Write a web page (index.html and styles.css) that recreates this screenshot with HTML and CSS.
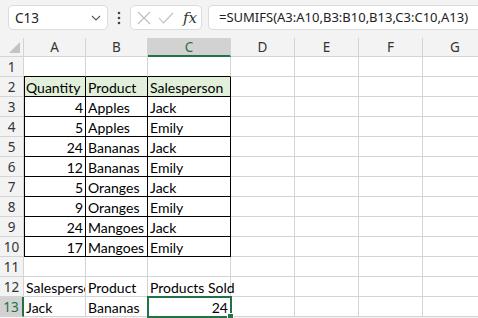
FILE: index.html
```html
<!DOCTYPE html>
<html lang="en">
<head>
  <meta charset="UTF-8" />
  <title>SUMIFS</title>
  <link rel="stylesheet" href="styles.css">
</head>
<body>
  <div class="formula-bar">
    <div class="name-box">
      <span>C13</span>
      <svg class="chevron" width="10" height="6" viewBox="0 0 10 6"><path d="M1 1l4 4 4-4" fill="none" stroke="#555" stroke-width="1.1"/></svg>
    </div>
    <div class="dots">
      <svg width="4" height="14" viewBox="0 0 4 14"><circle cx="2" cy="2" r="1.3" fill="#444"/><circle cx="2" cy="7" r="1.3" fill="#444"/><circle cx="2" cy="12" r="1.3" fill="#444"/></svg>
    </div>
    <div class="fx-box">
      <svg width="14" height="14" viewBox="0 0 14 14"><path d="M1 1l12 12M13 1L1 13" stroke="#bdbdbd" stroke-width="1.1" fill="none"/></svg>
      <svg width="16" height="12" viewBox="0 0 16 12"><path d="M1 6l4.5 5L15 1" stroke="#bdbdbd" stroke-width="1.1" fill="none"/></svg>
      <span class="fx">fx</span>
    </div>
    <div class="formula">=SUMIFS(A3:A10,B3:B10,B13,C3:C10,A13)</div>
  </div>

  <div class="sheet" id="sheet"></div>

  <script>
    const cols = ['A', 'B', 'C', 'D', 'E', 'F', 'G'];
    const rows = [
      [],
      ['Quantity', 'Product', 'Salesperson'],
      [4, 'Apples', 'Jack'],
      [5, 'Apples', 'Emily'],
      [24, 'Bananas', 'Jack'],
      [12, 'Bananas', 'Emily'],
      [5, 'Oranges', 'Jack'],
      [9, 'Oranges', 'Emily'],
      [24, 'Mangoes', 'Jack'],
      [17, 'Mangoes', 'Emily'],
      [],
      ['Salesperson', 'Product', 'Products Sold'],
      ['Jack', 'Bananas', 24]
    ];

    const sheet = document.getElementById('sheet');

    function add(cls, text) {
      const div = document.createElement('div');
      div.className = cls;
      if (text !== undefined) div.textContent = text;
      sheet.appendChild(div);
      return div;
    }

    add('corner');
    cols.forEach(c => add('col-head' + (c === 'C' ? ' active' : '') + (c === 'G' ? ' last' : ''), c));

    rows.forEach((row, r) => {
      const n = r + 1;
      add('row-head' + (n === 13 ? ' active' : ''), n);
      cols.forEach((c, i) => {
        const value = row[i];
        let cls = 'cell';
        if (typeof value === 'number') cls += ' num';
        if (n === 1 && i < 3) cls += ' above-table';
        if (n >= 2 && n <= 10 && i < 3) cls += ' table';
        if (n >= 2 && n <= 10 && i === 0) cls += ' table-left';
        if (n === 2 && i < 3) cls += ' table-head';
        if (n === 12 && i === 0) cls += ' clip';
        if (n === 13 && i === 2) cls += ' selected';
        if (c === 'G') cls += ' last';
        const cell = add(cls);
        if (value !== undefined) {
          const span = document.createElement('span');
          span.textContent = value;
          cell.appendChild(span);
        }
      });
    });
  </script>
</body>
</html>
```

FILE: styles.css
```css
body {
  margin: 0;
  width: 478px;
  height: 318px;
  overflow: hidden;
  background: #f3f3f3;
  font-family: "Noto Sans", sans-serif;
}

.formula-bar {
  display: flex;
  align-items: flex-start;
  height: 38px;
  padding: 5px 0 0 8px;
  box-sizing: border-box;
  white-space: nowrap;
}

.formula-bar > div {
  flex-shrink: 0;
}

.name-box {
  width: 100px;
  height: 25px;
  box-sizing: border-box;
  background: white;
  border: 1px solid #dcdcdc;
  border-radius: 5px;
  display: flex;
  align-items: center;
  justify-content: space-between;
  padding: 0 6px 0 6px;
  font-size: 13.5px;
  color: #222;
}

.name-box .chevron {
  margin-top: 1px;
}

.dots {
  width: 22px;
  height: 25px;
  display: flex;
  align-items: center;
  justify-content: center;
}

.fx-box {
  width: 72px;
  height: 25px;
  box-sizing: border-box;
  background: white;
  border: 1px solid #dcdcdc;
  border-radius: 5px;
  display: flex;
  align-items: center;
  gap: 7px;
  padding-left: 6px;
}

.fx-box .fx {
  font-family: "DejaVu Serif", serif;
  font-style: italic;
  font-size: 15px;
  color: #333;
  margin-left: 2px;
}

.formula-bar > .formula {
  flex: 1 1 auto;
  height: 25px;
  margin-left: 6px;
  box-sizing: border-box;
  background: white;
  border: 1px solid #dcdcdc;
  border-right: none;
  border-radius: 5px 0 0 5px;
  padding-left: 10px;
  font-size: 13px;
  line-height: 23px;
  color: #222;
  overflow: hidden;
}

.sheet {
  display: grid;
  grid-template-columns: 24px 62px 62px 83px 64px 64px 64px 55px;
  grid-template-rows: 19px repeat(13, 20px);
  background: white;
}

.corner {
  background: #f3f3f3;
  border-right: 1px solid #d4d4d4;
  border-bottom: 1px solid #d4d4d4;
  position: relative;
}

.corner::after {
  content: "";
  position: absolute;
  right: 3px;
  bottom: 3px;
  border-style: solid;
  border-width: 0 0 11px 11px;
  border-color: transparent transparent #c4c4c4 transparent;
}

.col-head,
.row-head {
  background: #f3f3f3;
  border-right: 1px solid #d4d4d4;
  border-bottom: 1px solid #d4d4d4;
  font-size: 13.5px;
  color: #333;
  display: flex;
  align-items: center;
  justify-content: center;
  box-sizing: border-box;
}

.col-head.last {
  border-right: none;
  padding-left: 9px;
}

.col-head.active {
  background: #d2d2d2;
  border-bottom: 2px solid #217346;
  color: #217346;
}

.row-head.active {
  background: #d2d2d2;
  border-right: 2px solid #217346;
  color: #217346;
}

.cell {
  border-right: 1px solid #d4d4d4;
  border-bottom: 1px solid #d4d4d4;
  box-sizing: border-box;
  font-family: Lato, "Liberation Sans", sans-serif;
  font-size: 14px;
  color: #000;
  padding: 1px 2px 0;
  line-height: 19px;
  white-space: nowrap;
  position: relative;
}

.cell.last {
  border-right: none;
}

.cell.num {
  text-align: right;
}

.cell.clip {
  overflow: hidden;
  padding-right: 0;
}

.cell.clip span {
  display: block;
  overflow: hidden;
}

.cell.above-table {
  border-bottom-color: #000;
}

.cell.table {
  border-right-color: #000;
  border-bottom-color: #000;
}

.cell.table-left {
  border-left: 1px solid #000;
  padding-left: 1px;
}

.cell.table-head {
  background: #e2efda;
}

.cell.selected {
  outline: 2px solid #217346;
  outline-offset: -1px;
  z-index: 1;
}

.cell.selected::after {
  content: "";
  position: absolute;
  right: -4px;
  bottom: -4px;
  width: 5px;
  height: 5px;
  background: #217346;
  border: 1px solid white;
}
```
